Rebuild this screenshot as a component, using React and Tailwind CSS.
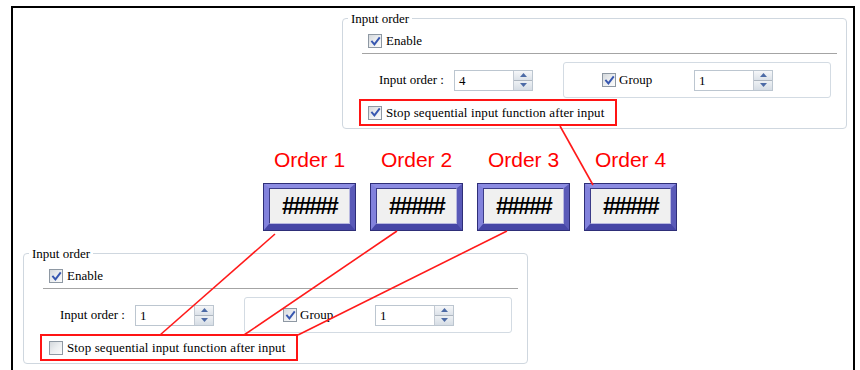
import React from "react";

function Check({ checked }) {
  return (
    <span className="flex h-[14px] w-[14px] shrink-0 items-center justify-center border border-[#8e98a3] bg-linear-to-br from-[#d4d8dc] via-[#eceef0] to-[#fbfbfb]">
      {checked && (
        <svg viewBox="0 0 12 12" className="h-[11px] w-[11px]">
          <path d="M2.2 6.2 L4.8 9.2 L10 2.4" stroke="#3757b0" strokeWidth="2.1" fill="none" strokeLinecap="square" />
        </svg>
      )}
    </span>
  );
}

function Spinner({ value, className = "" }) {
  return (
    <div className={"flex h-[21px] w-[79px] border border-[#bcc6d0] bg-white " + className}>
      <span className="flex-1 pl-[4px] leading-[19px]">{value}</span>
      <div className="flex w-[19px] flex-col border-l border-[#c3cad3]">
        <div className="flex flex-1 items-center justify-center border-b border-[#aeb6c0] bg-linear-to-b from-[#f6f7f9] to-[#dce2e9]">
          <svg viewBox="0 0 7 4" className="h-[4px] w-[7px]">
            <path d="M0 4 L3.5 0 L7 4 Z" fill="#4d6ba6" />
          </svg>
        </div>
        <div className="flex flex-1 items-center justify-center bg-linear-to-b from-[#eef1f4] to-[#d6dde5]">
          <svg viewBox="0 0 7 4" className="h-[4px] w-[7px]">
            <path d="M0 0 L7 0 L3.5 4 Z" fill="#4d6ba6" />
          </svg>
        </div>
      </div>
    </div>
  );
}

function GroupBox({ order, stopChecked, className = "" }) {
  return (
    <fieldset
      className={
        "w-[505px] rounded-[4px] border border-[#cfd7df] px-0 pb-[2px] pt-0 [font-family:Liberation_Serif,serif] text-[13px] text-black " +
        className
      }
    >
      <legend className="ml-[5px] px-[3px] [font-family:Liberation_Serif,serif] leading-[15px]">Input order</legend>
      <div className="mt-[7px] flex h-[16px] items-center gap-[4px] pl-[25px]">
        <Check checked />
        <span>Enable</span>
      </div>
      <div className="ml-[19px] mr-[9px] mt-[4px] h-px bg-[#a4a4a4]" />
      <div className="mt-[8px] flex items-center">
        <span className="ml-[36px] w-[75px]">Input order :</span>
        <Spinner value={order} />
        <div className="ml-[30px] flex h-[36px] w-[268px] items-center rounded-[3px] border border-[#d3dbe3]">
          <span className="ml-[38px]">
            <Check checked />
          </span>
          <span className="ml-[3px] w-[75px]">Group</span>
          <Spinner value="1" />
        </div>
      </div>
      <div className="ml-[16px] mt-[1px] flex h-[27px] w-[258px] items-center gap-[4px] border-2 border-[#ff1414] pl-[7px]">
        <Check checked={stopChecked} />
        <span className="tracking-[0.12px]">Stop sequential input function after input</span>
      </div>
    </fieldset>
  );
}

function HashButton() {
  return (
    <div className="mt-[11px] h-[48px] w-[93px] bg-[#2e2e78] p-px">
      <div className="flex h-full w-full border-b-[6px] border-l-[5px] border-r-[5px] border-t-[4px] border-b-[#4646a6] border-l-[#8282dc] border-r-[#5a5ab8] border-t-[#8c8ce2] bg-[#7070cc]">
        <div className="flex flex-1 items-center justify-center border border-b-[#b8b8e0] border-l-[#3c3c88] border-r-[#b8b8e0] border-t-[#3c3c88] bg-[#f0f0f0]">
          <span className="[font-family:Liberation_Sans,Arial,sans-serif] text-[23px] font-bold leading-none tracking-[-1.8px] text-black">
            #####
          </span>
        </div>
      </div>
    </div>
  );
}

export default function App() {
  return (
    <div className="relative h-[370px] w-[860px] overflow-hidden bg-white">
      <div className="ml-[11px] mt-[6px] h-[400px] w-[844px] border-2 border-black">
        <GroupBox order="4" stopChecked className="ml-[329px] mt-[3px]" />
        <div className="ml-[250px] mt-[19px] flex gap-[14px]">
          {[1, 2, 3, 4].map((n) => (
            <div key={n} className="flex w-[93px] flex-col items-center">
              <span className="[font-family:Liberation_Sans,Arial,sans-serif] text-[21px] leading-[24px] text-[#ff0000]">
                Order {n}
              </span>
              <HashButton />
            </div>
          ))}
        </div>
        <GroupBox order="1" stopChecked={false} className="ml-[10px] mt-[15px]" />
      </div>
      <svg
        className="pointer-events-none absolute left-0 top-0"
        width="860"
        height="370"
        viewBox="0 0 860 370"
      >
        <g stroke="#ff1a1a" strokeWidth="1.6" fill="none">
          <line x1="560" y1="126" x2="593" y2="185" />
          <line x1="275" y1="234" x2="160" y2="335" />
          <line x1="397" y1="231" x2="244" y2="335" />
          <line x1="507" y1="231" x2="298" y2="335" />
        </g>
      </svg>
    </div>
  );
}
